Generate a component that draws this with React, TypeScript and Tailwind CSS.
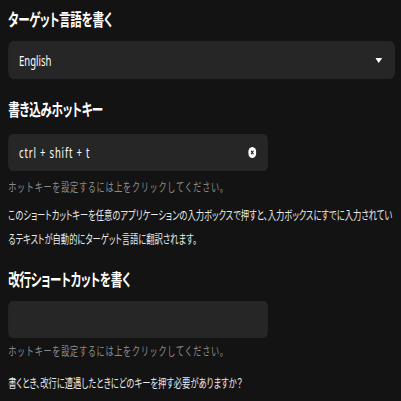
import React from "react";

const jp = "font-['Noto_Sans','Noto_Sans_CJK_JP',sans-serif]";
const palt = "[font-feature-settings:'palt']";

function Helper({ className = "" }: { className?: string }) {
  return (
    <p className={`text-[12px] leading-[16px] tracking-[1px] text-[#8a8a8a] ${className}`}>
      ホットキーを設定するには上をクリックしてください。
    </p>
  );
}

function Title({ children, className = "" }: { children: React.ReactNode; className?: string }) {
  return (
    <h2 className={`text-[17px] leading-[28px] font-bold tracking-[-0.4px] text-white ${palt} ${className}`}>
      {children}
    </h2>
  );
}

export default function App() {
  return (
    <div className={`w-full h-[401px] overflow-hidden bg-[#131313] ${jp}`}>
      <div className="w-[590px] origin-top-left scale-x-[0.68] pl-3 pr-[9px] pt-[6px]">
        <Title>ターゲット言語を書く</Title>
        <div className="mt-[7px] h-[38px] rounded-[8px] bg-[#262626] flex items-center justify-between pl-4 pr-[19px]">
          <span className="text-[14px] text-white">English</span>
          <svg width="10" height="5" viewBox="0 0 10 5">
            <path d="M0 0 L10 0 L5 5 Z" fill="#ffffff" />
          </svg>
        </div>

        <Title className="mt-[17px]">書き込みホットキー</Title>
        <div className="mt-[10px] w-[382px] h-[37px] rounded-[6px] bg-[#262626] flex items-center justify-between pl-4 pr-[17px]">
          <span className="text-[14px] tracking-[1.2px] text-white">ctrl + shift + t</span>
          <svg width="12" height="11" viewBox="0 0 12 11" preserveAspectRatio="none">
            <ellipse cx="6" cy="5.5" rx="6" ry="5.5" fill="#ffffff" />
            <path d="M4.2 3.7 L7.8 7.3 M7.8 3.7 L4.2 7.3" stroke="#262626" strokeWidth="1.4" />
          </svg>
        </div>
        <Helper className="mt-[9px]" />

        <p className={`mt-[8px] text-[12.2px] leading-[24px] text-[#e8e8e8] ${palt}`}>
          このショートカットキーを任意のアプリケーションの入力ボックスで押すと、入力ボックスにすでに入力されているテキストが自動的にターゲット言語に翻訳されます。
        </p>

        <Title className="mt-[14px]">改行ショートカットを書く</Title>
        <div className="mt-[7px] w-[382px] h-[37px] rounded-[6px] bg-[#262626]" />
        <Helper className="mt-[6px]" />

        <p className={`mt-[12px] text-[12.2px] leading-[24px] text-[#e8e8e8] ${palt}`}>
          書くとき、改行に遭遇したときにどのキーを押す必要がありますか？
        </p>
      </div>
    </div>
  );
}
